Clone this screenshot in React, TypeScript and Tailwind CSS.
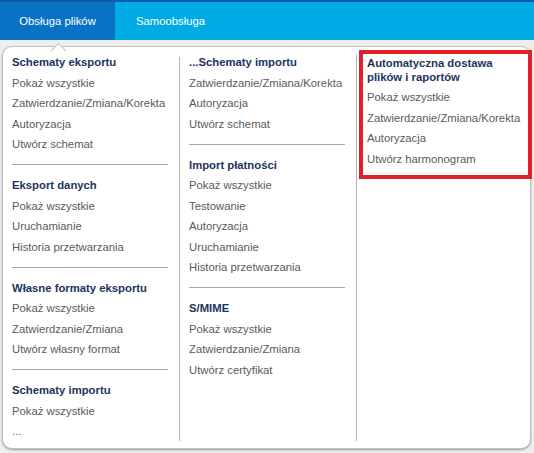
import React from "react";

type Group = { title: string; items: string[] };

const col1: Group[] = [
  {
    title: "Schematy eksportu",
    items: ["Pokaż wszystkie", "Zatwierdzanie/Zmiana/Korekta", "Autoryzacja", "Utwórz schemat"],
  },
  { title: "Eksport danych", items: ["Pokaż wszystkie", "Uruchamianie", "Historia przetwarzania"] },
  {
    title: "Własne formaty eksportu",
    items: ["Pokaż wszystkie", "Zatwierdzanie/Zmiana", "Utwórz własny format"],
  },
  { title: "Schematy importu", items: ["Pokaż wszystkie", "..."] },
];

const col2: Group[] = [
  {
    title: "...Schematy importu",
    items: ["Zatwierdzanie/Zmiana/Korekta", "Autoryzacja", "Utwórz schemat"],
  },
  {
    title: "Import płatności",
    items: ["Pokaż wszystkie", "Testowanie", "Autoryzacja", "Uruchamianie", "Historia przetwarzania"],
  },
  { title: "S/MIME", items: ["Pokaż wszystkie", "Zatwierdzanie/Zmiana", "Utwórz certyfikat"] },
];

function MenuColumn({ groups }: { groups: Group[] }) {
  return (
    <div className="w-[176px] shrink-0 pl-[9px] pr-[11px] pt-[5px]">
      {groups.map((g, i) => (
        <div key={g.title}>
          {i > 0 && (
            <div className="h-[20.5px] flex items-center">
              <div className="h-px w-full bg-[#a8a8a8]" />
            </div>
          )}
          <div className="font-bold text-[#1c3461] leading-[20.5px]">{g.title}</div>
          {g.items.map((it, j) => (
            <div key={j} className="text-[#5a5a5a] leading-[20.5px] whitespace-nowrap">
              {it}
            </div>
          ))}
        </div>
      ))}
    </div>
  );
}

export default function App() {
  return (
    <div className="w-[534px] h-[453px] bg-[#eeeeee] font-['Liberation_Sans',Arial,sans-serif] text-[11.3px] overflow-hidden">
      {/* Top navigation */}
      <div className="h-[2px] bg-[#0b5ea7]" />
      <div className="h-[38px] bg-[#00abe4] flex text-white">
        <div className="w-[115px] bg-[#0a72c4] flex items-center justify-center">Obsługa plików</div>
        <div className="pl-[21px] flex items-center">Samoobsługa</div>
      </div>

      {/* Dropdown panel */}
      <div className="pt-[6px] pl-[2px] pr-[3px]">
        <div className="relative h-[403px] bg-white border border-[#c2c2c2] rounded-[10px] shadow-[0_1px_2px_rgba(0,0,0,0.35)] flex">
          <div className="absolute left-[49.5px] top-[-2.5px] w-[11px] h-[11px] rotate-45 bg-white border-l border-t border-[#c2c2c2]" />

          <MenuColumn groups={col1} />
          <div className="w-px bg-[#b4b4b4] mt-[10px] mb-[7px]" />
          <MenuColumn groups={col2} />
          <div className="w-px bg-[#b4b4b4] mt-[8px] mb-[7px]" />

          <div className="flex-1 pl-[2px] pt-[3px] mr-[-2px]">
            <div className="border-[4px] border-[#e0212b] pl-[4px] pt-[2px] pb-[6px]">
              <div className="font-bold text-[#1c3461] leading-[14px]">
                Automatyczna dostawa
                <br />
                plików i raportów
              </div>
              <div className="mt-[3px]">
                {["Pokaż wszystkie", "Zatwierdzanie/Zmiana/Korekta", "Autoryzacja", "Utwórz harmonogram"].map(
                  (it) => (
                    <div key={it} className="text-[#5a5a5a] leading-[20.5px] whitespace-nowrap">
                      {it}
                    </div>
                  )
                )}
              </div>
            </div>
          </div>
        </div>
      </div>
    </div>
  );
}
